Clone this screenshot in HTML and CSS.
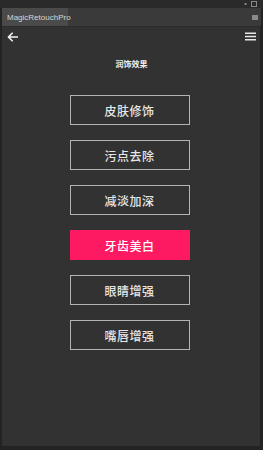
FILE: index.html
```html
<!DOCTYPE html>
<html lang="zh">
<head>
<meta charset="utf-8">
<link rel="stylesheet" href="styles.css">
</head>
<body>
<div class="window">
  <div class="topstrip">
    <span class="tiny-icon">&#9666;&#9656;</span>
    <span class="tiny-close"></span>
  </div>
  <div class="tabbar">
    <div class="tab">MagicRetouchPro</div>
    <div class="tabmenu"></div>
  </div>
  <div class="panel">
    <div class="toolbar">
      <svg class="back" width="11" height="10" viewBox="0 0 11 10"><path d="M10.5 5H1.5M5.2 1.2L1.4 5L5.2 8.8" fill="none" stroke="#f2f2f2" stroke-width="1.6" stroke-linecap="round" stroke-linejoin="round"/></svg>
      <svg class="menu" width="11" height="9" viewBox="0 0 11 9"><path d="M0 1.2H11M0 4.5H11M0 7.8H11" stroke="#e8e8e8" stroke-width="1.6"/></svg>
    </div>
    <div class="title">润饰效果</div>
    <div class="buttons">
      <div class="btn">皮肤修饰</div>
      <div class="btn">污点去除</div>
      <div class="btn">减淡加深</div>
      <div class="btn active">牙齿美白</div>
      <div class="btn">眼睛增强</div>
      <div class="btn">嘴唇增强</div>
    </div>
  </div>
</div>
</body>
</html>
```
FILE: styles.css
```css
html, body {
  margin: 0;
  padding: 0;
  background: #232323;
}
.window {
  width: 263px;
  height: 450px;
  background: #232323;
  display: flex;
  flex-direction: column;
  font-family: "Noto Sans CJK SC", "Liberation Sans", sans-serif;
}
.topstrip {
  height: 8px;
  background: #2a2a2a;
  display: flex;
  justify-content: flex-end;
  align-items: center;
  gap: 5px;
  padding-right: 6px;
}
.tiny-icon {
  font-family: "DejaVu Sans", sans-serif;
  font-size: 4px;
  line-height: 4px;
  color: #9a9a9a;
  letter-spacing: -1px;
}
.tiny-close {
  width: 4px;
  height: 4px;
  border: 1px solid #8a8a8a;
}
.tabbar {
  height: 18px;
  margin: 0 2px;
  background: #3a3a3a;
  display: flex;
  align-items: stretch;
  justify-content: space-between;
}
.tab {
  width: 61px;
  background: #4a4a4a;
  color: #d6d6d6;
  font-family: "Liberation Sans", sans-serif;
  font-size: 8px;
  display: flex;
  align-items: center;
  padding-left: 5px;
}
.tabmenu {
  width: 6px;
  height: 5px;
  background: #8a8a8a;
  align-self: center;
  margin-right: 3px;
}
.panel {
  flex: 1;
  margin: 0 3px 4px 2px;
  background: #323232;
  border-top: 1px solid #2b2b2b;
  display: flex;
  flex-direction: column;
}
.toolbar {
  height: 19px;
  display: flex;
  justify-content: space-between;
  align-items: center;
  padding: 0 4px 0 5px;
}
.title {
  margin-top: 13px;
  text-align: center;
  color: #f0f0f0;
  font-size: 8px;
  font-weight: bold;
  line-height: 10px;
  padding-left: 1px;
}
.buttons {
  margin-top: 26px;
  display: flex;
  flex-direction: column;
  align-items: center;
  gap: 15px;
  padding-right: 3px;
}
.btn {
  box-sizing: border-box;
  width: 120px;
  height: 30px;
  border: 1.5px solid #b4b4b4;
  color: #e6e6e6;
  font-size: 12px;
  font-weight: 500;
  display: flex;
  align-items: center;
  justify-content: center;
  letter-spacing: 0.5px;
}
.btn.active {
  background: #fe1a62;
  border-color: #fe1a62;
  color: #ffffff;
}
```
